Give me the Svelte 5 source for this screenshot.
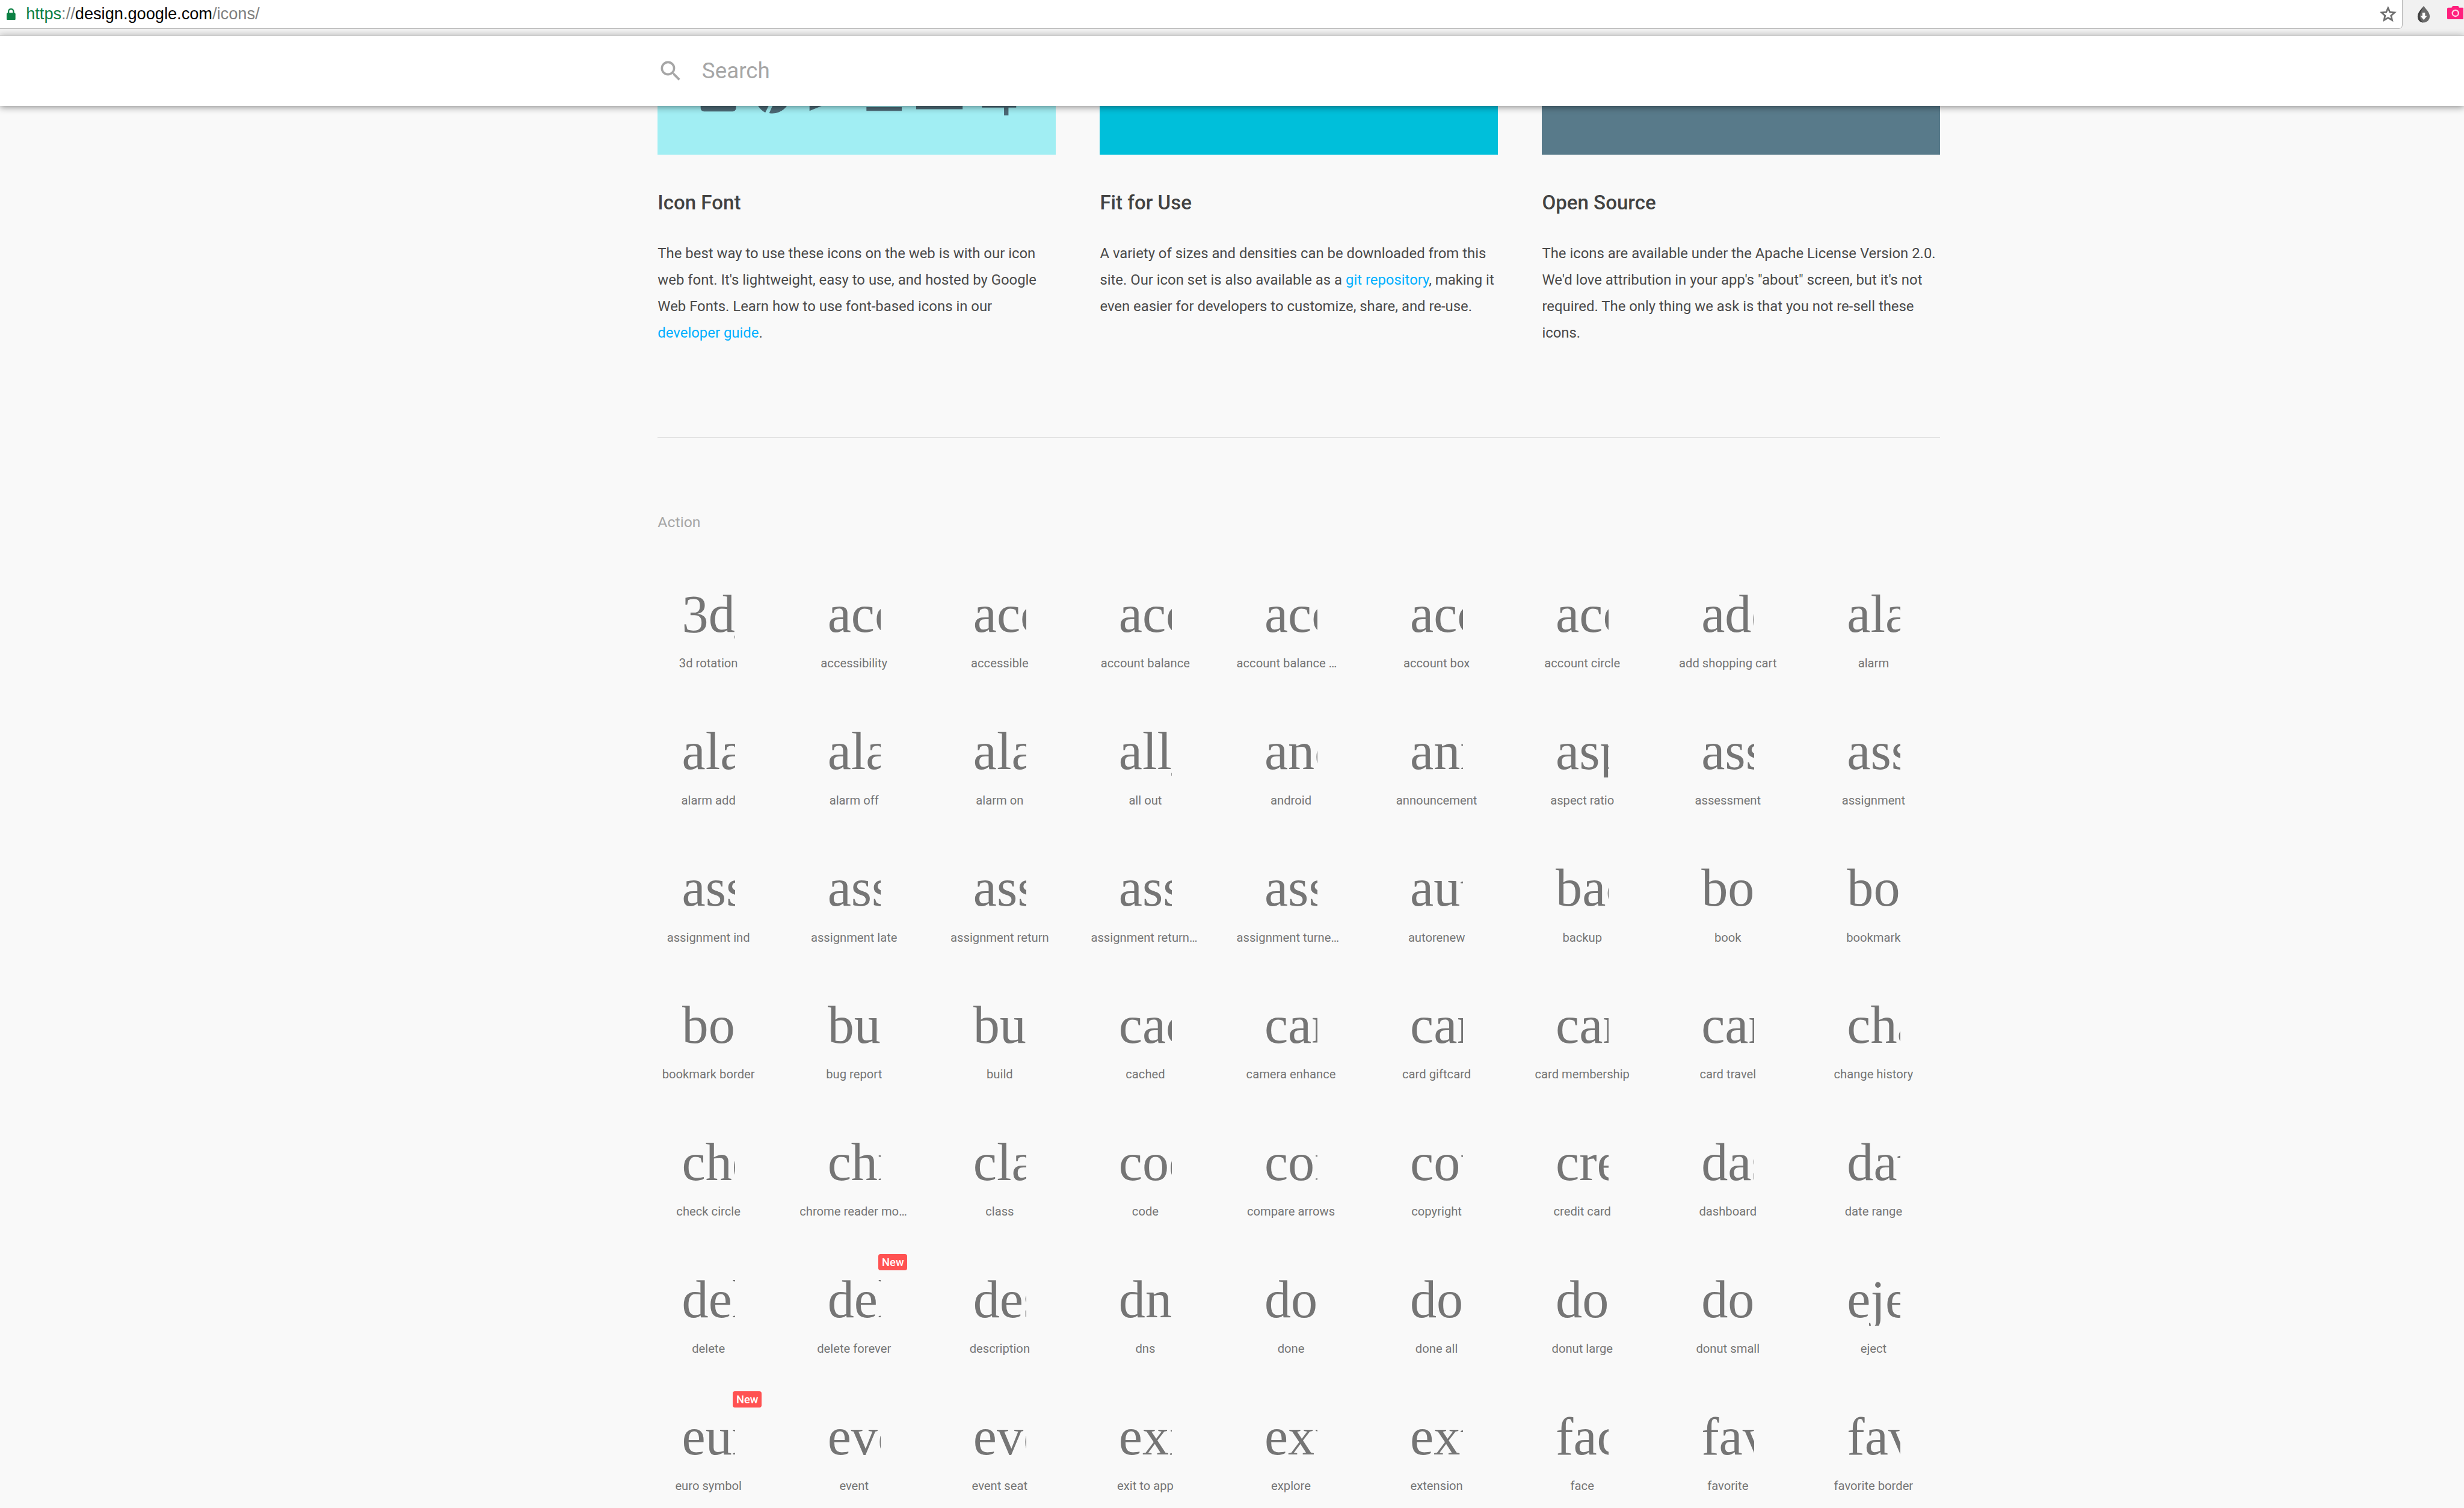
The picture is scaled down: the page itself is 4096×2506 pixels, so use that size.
<script>
  const features = [
    { title: 'Icon Font', color: 'light' },
    { title: 'Fit for Use', color: 'cyan' },
    { title: 'Open Source', color: 'slate' }
  ];

  const icons = [
    '3d_rotation', 'accessibility', 'accessible', 'account_balance', 'account_balance_wallet', 'account_box', 'account_circle', 'add_shopping_cart', 'alarm',
    'alarm_add', 'alarm_off', 'alarm_on', 'all_out', 'android', 'announcement', 'aspect_ratio', 'assessment', 'assignment',
    'assignment_ind', 'assignment_late', 'assignment_return', 'assignment_returned', 'assignment_turned_in', 'autorenew', 'backup', 'book', 'bookmark',
    'bookmark_border', 'bug_report', 'build', 'cached', 'camera_enhance', 'card_giftcard', 'card_membership', 'card_travel', 'change_history',
    'check_circle', 'chrome_reader_mode', 'class', 'code', 'compare_arrows', 'copyright', 'credit_card', 'dashboard', 'date_range',
    'delete', 'delete_forever', 'description', 'dns', 'done', 'done_all', 'donut_large', 'donut_small', 'eject',
    'euro_symbol', 'event', 'event_seat', 'exit_to_app', 'explore', 'extension', 'face', 'favorite', 'favorite_border'
  ];
  const fresh = ['delete_forever', 'euro_symbol'];
</script>

<div class="page">
  <div class="chrome">
    <div class="urlbar">
      <svg class="lock" viewBox="0 0 16 21" width="16" height="21">
        <path d="M3.5 9V5.5a4.5 4.5 0 0 1 9 0V9" fill="none" stroke="#0b8043" stroke-width="2.4" />
        <rect x="0" y="8" width="16" height="13" rx="2" fill="#0b8043" />
      </svg>
      <span class="url"><span class="scheme">https</span><span class="dim">://</span><span class="host">design.google.com</span><span class="dim">/icons/</span></span>
      <svg class="star" viewBox="0 0 30 30" width="30" height="30">
        <path d="M15 3.5l3.4 7.6 8.3.8-6.3 5.5 1.9 8.1-7.3-4.3-7.3 4.3 1.9-8.1-6.3-5.5 8.3-.8z" fill="none" stroke="#6e6e6e" stroke-width="3" />
      </svg>
    </div>
    <div class="extensions">
      <svg viewBox="0 0 24 30" width="24" height="30">
        <path d="M12 0C8 6 1 11 1 19a11 11 0 0 0 22 0C23 11 16 6 12 0z" fill="#6b6b6b" />
        <path d="M1 19C1 11 8 6 12 0C9 7 5 12 5 19c0 4 2 8 6 10.900C5 29.500 1 25 1 19z" fill="#3f3f3f" />
        <path d="M9.500 12h5v6h3.500l-6 7-6-7h3.500z" fill="#fff" />
      </svg>
      <svg viewBox="0 0 30 24" width="30" height="24">
        <path d="M2 3h6l2-3h10l2 3h6a2 2 0 0 1 2 2v17a2 2 0 0 1-2 2H2a2 2 0 0 1-2-2V5a2 2 0 0 1 2-2z" fill="#ff1f7d" />
        <circle cx="15" cy="13" r="5.500" fill="none" stroke="#ffd0e2" stroke-width="2.600" />
      </svg>
    </div>
  </div>

  <header class="search">
    <svg viewBox="0 0 24 24" width="48" height="48">
      <path d="M15.500 14h-.79l-.28-.27A6.470 6.470 0 0 0 16 9.500 6.500 6.500 0 1 0 9.500 16c1.610 0 3.090-.59 4.230-1.570l.27.28v.79l5 4.990L20.490 19l-4.990-5zm-6 0C7.010 14 5 11.990 5 9.500S7.010 5 9.500 5 14 7.010 14 9.500 11.990 14 9.500 14z" fill="#a6a6a6" />
    </svg>
    <span>Search</span>
  </header>

  <main class="content">
    <section class="features">
      {#each features as f, i}
        <article>
          <div class="banner {f.color}">
            {#if i === 0}
              <svg viewBox="0 0 720 88" width="720" height="88">
                <g fill="#4d6a76">
                  <path d="M78 0h64v4a6 6 0 0 1-6 6H84a6 6 0 0 1-6-6z" />
                  <path d="M182 0h19l-6 12a32 32 0 0 1-13-12zM208 0h26a32 32 0 0 1-32 13z" />
                  <path d="M275 0h22l-22 9z" />
                  <rect x="378" y="2" width="64" height="7" />
                  <rect x="468" y="0" width="84" height="6" />
                  <rect x="587" y="0" width="62" height="3" />
                  <rect x="627" y="0" width="8" height="17" />
                </g>
              </svg>
            {/if}
          </div>
          <h3>{f.title}</h3>
          {#if i === 0}
            <p>The best way to use these icons on the web is with our icon web font. It's lightweight, easy to use, and hosted by Google Web Fonts. Learn how to use font-based icons in our <a href="#top">developer guide</a>.</p>
          {:else if i === 1}
            <p>A variety of sizes and densities can be downloaded from this site. Our icon set is also available as a <a href="#top">git repository</a>, making it even easier for developers to customize, share, and re-use.</p>
          {:else}
            <p>The icons are available under the Apache License Version 2.0. We'd love attribution in your app's "about" screen, but it's not required. The only thing we ask is that you not re-sell these icons.</p>
          {/if}
        </article>
      {/each}
    </section>

    <hr />

    <h2>Action</h2>

    <section class="grid">
      {#each icons as name}
        <div class="cell">
          {#if fresh.includes(name)}<span class="badge">New</span>{/if}
          <i>{name}</i>
          <span class="label">{name.replaceAll('_', ' ')}</span>
        </div>
      {/each}
    </section>
  </main>
</div>

<style>
  :global(body) {
    margin: 0;
    background: #f9f9f9;
    overflow: hidden;
  }

  .page {
    zoom: 0.9188;
    width: 4458px;
    height: 2728px;
    overflow: hidden;
    background: #f9f9f9;
    font-family: Roboto, sans-serif;
  }

  .chrome {
    display: flex;
    height: 63px;
    background: #f1f1f1;
    border-bottom: 1px solid #b8b8b8;
    box-sizing: content-box;
  }

  .urlbar {
    display: flex;
    align-items: center;
    width: 4347px;
    height: 52px;
    box-sizing: border-box;
    padding: 0 10px 0 12px;
    background: #fff;
    border-right: 1px solid #b8b8b8;
    border-bottom: 1px solid #b8b8b8;
    border-bottom-right-radius: 7px;
  }

  .lock {
    flex: none;
  }

  .url {
    margin-left: 19px;
    font: 29.600px "Liberation Sans", sans-serif;
    color: #000;
    white-space: nowrap;
  }

  .scheme {
    color: #0b8043;
  }

  .dim {
    color: #808080;
  }

  .star {
    margin-left: auto;
  }

  .extensions {
    display: flex;
    align-items: flex-start;
    gap: 30px;
    padding: 11px 0 0 26px;
  }

  .search {
    position: relative;
    z-index: 1;
    display: flex;
    align-items: center;
    gap: 32px;
    height: 128px;
    padding-left: 1190px;
    background: #fff;
    box-shadow: 0 2px 12px rgba(0, 0, 0, 0.45);
    font-size: 40px;
    color: #a6a6a6;
  }

  .content {
    padding-left: 1190px;
    width: 2320px;
  }

  .features {
    display: grid;
    grid-template-columns: repeat(3, 720px);
    gap: 80px;
  }

  .banner {
    height: 88px;
  }

  .banner svg {
    display: block;
  }

  .light {
    background: #a1eef3;
  }

  .cyan {
    background: #00bfda;
  }

  .slate {
    background: #587a8a;
  }

  h3 {
    margin: 63px 0 43px;
    font-size: 36px;
    line-height: 48px;
    font-weight: 500;
    color: #424242;
  }

  p {
    margin: 0;
    height: 192px;
    font-size: 26px;
    line-height: 48px;
    color: #4a4a4a;
  }

  a {
    color: #00b0ff;
    text-decoration: none;
  }

  hr {
    width: 2320px;
    height: 2px;
    margin: 164px 0 0;
    border: 0;
    background: #e4e4e4;
  }

  h2 {
    margin: 133px 0 0;
    font-size: 27px;
    line-height: 40px;
    font-weight: 400;
    color: #a6a6a6;
  }

  .grid {
    display: grid;
    grid-template-columns: repeat(9, 263.500px);
    margin: 73px 0 0 -40px;
    width: 2372px;
  }

  .cell {
    position: relative;
    display: flex;
    flex-direction: column;
    align-items: center;
    height: 248px;
    padding-top: 24px;
    box-sizing: border-box;
    color: #757575;
  }

  i {
    display: block;
    width: 96px;
    height: 96px;
    overflow: hidden;
    font: 96px/96px "Liberation Serif", serif;
    white-space: nowrap;
  }

  .label {
    width: 197px;
    margin-top: 26px;
    overflow: hidden;
    font-size: 22px;
    line-height: 32px;
    text-align: center;
    text-overflow: ellipsis;
    white-space: nowrap;
  }

  .badge {
    position: absolute;
    top: -10px;
    left: 176px;
    width: 52px;
    height: 30px;
    border-radius: 4px;
    background: #ff5252;
    color: #fff;
    font-size: 20px;
    font-weight: 500;
    line-height: 30px;
    text-align: center;
  }
</style>
